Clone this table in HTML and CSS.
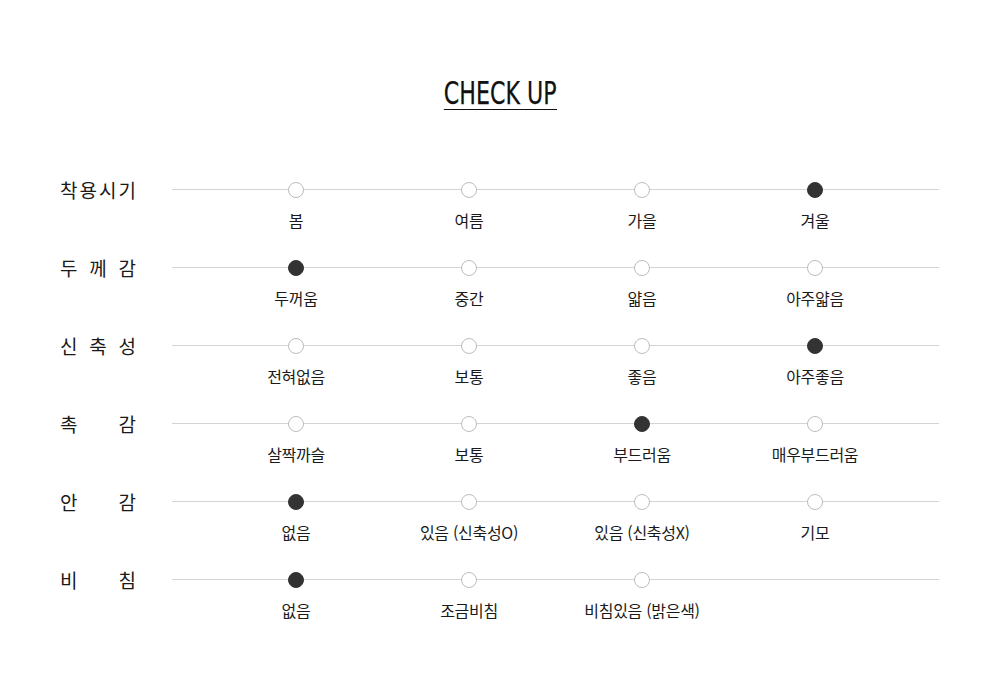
FILE: index.html
```html
<!DOCTYPE html>
<html lang="ko">
<head>
<meta charset="utf-8">
<title>CHECK UP</title>
<link rel="stylesheet" href="styles.css">
</head>
<body>
<div class="page">
  <header class="head">
    <h1 class="title">CHECK UP</h1>
  </header>
  <div class="table">
    <div class="row">
      <div class="row-label"><span>착</span><span>용</span><span>시</span><span>기</span></div>
      <div class="track">
        <div class="opt"><i class="dot"></i><span class="opt-text">봄</span></div>
        <div class="opt"><i class="dot"></i><span class="opt-text">여름</span></div>
        <div class="opt"><i class="dot"></i><span class="opt-text">가을</span></div>
        <div class="opt"><i class="dot on"></i><span class="opt-text">겨울</span></div>
      </div>
    </div>
    <div class="row">
      <div class="row-label"><span>두</span><span>께</span><span>감</span></div>
      <div class="track">
        <div class="opt"><i class="dot on"></i><span class="opt-text">두꺼움</span></div>
        <div class="opt"><i class="dot"></i><span class="opt-text">중간</span></div>
        <div class="opt"><i class="dot"></i><span class="opt-text">얇음</span></div>
        <div class="opt"><i class="dot"></i><span class="opt-text">아주얇음</span></div>
      </div>
    </div>
    <div class="row">
      <div class="row-label"><span>신</span><span>축</span><span>성</span></div>
      <div class="track">
        <div class="opt"><i class="dot"></i><span class="opt-text">전혀없음</span></div>
        <div class="opt"><i class="dot"></i><span class="opt-text">보통</span></div>
        <div class="opt"><i class="dot"></i><span class="opt-text">좋음</span></div>
        <div class="opt"><i class="dot on"></i><span class="opt-text">아주좋음</span></div>
      </div>
    </div>
    <div class="row">
      <div class="row-label"><span>촉</span><span>감</span></div>
      <div class="track">
        <div class="opt"><i class="dot"></i><span class="opt-text">살짝까슬</span></div>
        <div class="opt"><i class="dot"></i><span class="opt-text">보통</span></div>
        <div class="opt"><i class="dot on"></i><span class="opt-text">부드러움</span></div>
        <div class="opt"><i class="dot"></i><span class="opt-text">매우부드러움</span></div>
      </div>
    </div>
    <div class="row">
      <div class="row-label"><span>안</span><span>감</span></div>
      <div class="track">
        <div class="opt"><i class="dot on"></i><span class="opt-text">없음</span></div>
        <div class="opt"><i class="dot"></i><span class="opt-text">있음 (신축성O)</span></div>
        <div class="opt"><i class="dot"></i><span class="opt-text">있음 (신축성X)</span></div>
        <div class="opt"><i class="dot"></i><span class="opt-text">기모</span></div>
      </div>
    </div>
    <div class="row">
      <div class="row-label"><span>비</span><span>침</span></div>
      <div class="track">
        <div class="opt"><i class="dot on"></i><span class="opt-text">없음</span></div>
        <div class="opt"><i class="dot"></i><span class="opt-text">조금비침</span></div>
        <div class="opt"><i class="dot"></i><span class="opt-text">비침있음 (밝은색)</span></div>
      </div>
    </div>
  </div>
</div>
</body>
</html>
```

FILE: styles.css
```css
html, body {
  margin: 0;
  padding: 0;
  background: #fff;
}

body {
  font-family: "Noto Sans CJK KR", "Noto Sans", sans-serif;
  color: #222;
}

.page {
  width: 1000px;
  height: 698px;
  overflow: hidden;
}

.head {
  padding-top: 77px;
  text-align: center;
  height: 33px;
}

.title {
  display: inline-block;
  margin: 0;
  font-family: "Liberation Sans Narrow", "DejaVu Sans Condensed", "Liberation Sans", sans-serif;
  font-weight: 400;
  font-size: 32px;
  line-height: 32px;
  color: #111;
  border-bottom: 1px solid #111;
  -webkit-text-stroke: 0.25px #111;
  transform: scaleX(0.77);
  transform-origin: center top;
}

.table {
  margin-top: 68px;
  padding-left: 60px;
}

.row {
  display: flex;
  height: 78px;
}

.row-label {
  width: 76px;
  margin-right: 36px;
  display: flex;
  justify-content: space-between;
  font-size: 19px;
  line-height: 24px;
  height: 24px;
  color: #1a1a1a;
}

.track {
  width: 767px;
  padding: 0 37.5px;
  box-sizing: border-box;
  display: grid;
  grid-template-columns: repeat(4, 173px);
  align-content: start;
  background: linear-gradient(#d4d4d4, #d4d4d4) no-repeat 0 11px / 100% 1px;
}

.opt {
  display: flex;
  flex-direction: column;
  align-items: center;
}

.dot {
  display: block;
  width: 16px;
  height: 16px;
  margin-top: 4px;
  margin-bottom: 4px;
  box-sizing: border-box;
  border-radius: 50%;
  border: 1px solid #bdbdbd;
  background: #fff;
}

.dot.on {
  border-color: #333;
  background: #333;
}

.opt-text {
  margin-top: 7px;
  font-size: 16px;
  line-height: 22px;
  color: #1a1a1a;
  white-space: nowrap;
  letter-spacing: -0.3px;
}
```
